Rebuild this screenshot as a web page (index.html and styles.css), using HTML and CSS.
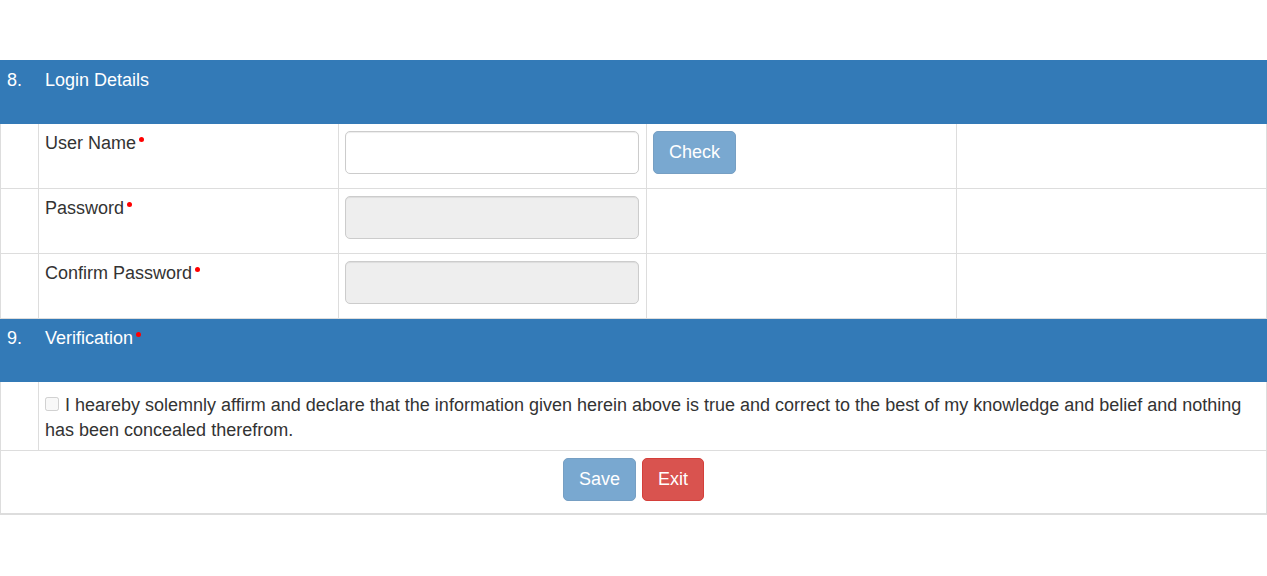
FILE: index.html
```html
<!DOCTYPE html>
<html>
<head>
<meta charset="utf-8">
<link rel="stylesheet" href="styles.css">
</head>
<body>
<table class="form-table">
  <colgroup>
    <col class="c1"><col class="c2"><col class="c3"><col class="c4"><col class="c5">
  </colgroup>
  <tr class="section">
    <td class="num">8.</td>
    <td colspan="4">Login Details</td>
  </tr>
  <tr class="field">
    <td></td>
    <td class="label">User Name<span class="req"></span></td>
    <td class="ctrl"><input class="input" type="text"></td>
    <td class="ctrl"><button class="btn btn-primary" disabled>Check</button></td>
    <td></td>
  </tr>
  <tr class="field">
    <td></td>
    <td class="label">Password<span class="req"></span></td>
    <td class="ctrl"><input class="input" type="password" disabled></td>
    <td></td>
    <td></td>
  </tr>
  <tr class="field">
    <td></td>
    <td class="label">Confirm Password<span class="req"></span></td>
    <td class="ctrl"><input class="input" type="password" disabled></td>
    <td></td>
    <td></td>
  </tr>
  <tr class="section">
    <td class="num">9.</td>
    <td colspan="4">Verification<span class="req"></span></td>
  </tr>
  <tr class="declare">
    <td></td>
    <td colspan="4"><input class="check" type="checkbox" disabled> I heareby solemnly affirm and declare that the information given herein above is true and correct to the best of my knowledge and belief and nothing has been concealed therefrom.</td>
  </tr>
  <tr class="actions">
    <td colspan="5">
      <div class="btns">
        <button class="btn btn-primary" disabled>Save</button>
        <button class="btn btn-danger">Exit</button>
      </div>
    </td>
  </tr>
</table>
</body>
</html>
```
FILE: styles.css
```css
html, body {
  margin: 0;
  padding: 0;
  background: #fff;
}
body {
  font-family: "Liberation Sans", Arial, sans-serif;
  font-size: 18px;
  color: #333;
}
.form-table {
  margin-top: 60px;
  width: 100%;
  border-collapse: collapse;
  table-layout: fixed;
}
.c1 { width: 38px; }
.c2 { width: 300px; }
.c3 { width: 308px; }
.c4 { width: 310px; }
.c5 { width: auto; }
.form-table td {
  border: 1px solid #ddd;
  padding: 7px 6px 8px;
  vertical-align: top;
  line-height: 24px;
}
.section td {
  background: #337ab7;
  color: #fff;
  height: 47px;
  border-color: #337ab7;
  border-left: 1px solid #cfdeec;
}
.section td:first-child {
  border-left: 1px solid #337ab7;
}
.field td {
  height: 49px;
}
.req {
  display: inline-block;
  width: 5px;
  height: 5px;
  border-radius: 50%;
  background: #f00;
  margin-left: 3px;
  vertical-align: 7px;
}
.input {
  box-sizing: border-box;
  display: block;
  width: 294px;
  height: 43px;
  border: 1px solid #ccc;
  border-radius: 5px;
  background: #fff;
  margin: 0;
  padding: 6px 12px;
  font: inherit;
  box-shadow: inset 0 1px 1px rgba(0,0,0,.075);
}
.input:disabled {
  background: #eee;
}
.btn {
  box-sizing: border-box;
  height: 43px;
  padding: 0 15px;
  border: 1px solid transparent;
  border-radius: 5px;
  font-family: "Liberation Sans", Arial, sans-serif;
  font-size: 18px;
  color: #fff;
  margin: 0;
  cursor: pointer;
}
.btn-primary {
  background: #337ab7;
  border-color: #2e6da4;
}
.btn-primary:disabled {
  opacity: .65;
  color: #fff;
}
.btn-danger {
  background: #d9534f;
  border-color: #d43f3a;
}
.declare td {
  height: 49px;
  line-height: 25px;
  padding-top: 11px;
  padding-bottom: 7px;
}
.check {
  margin: 0 1px 0 0;
  width: 14px;
  height: 14px;
  vertical-align: 0;
}
.actions td {
  height: 48px;
  padding: 7px;
  border-bottom: 2px solid #ddd;
}
.btns {
  display: flex;
  justify-content: center;
  gap: 6px;
}
```
